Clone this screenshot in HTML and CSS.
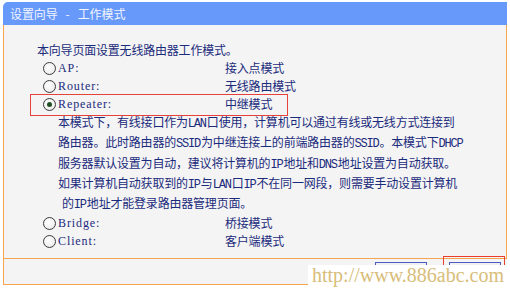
FILE: index.html
```html
<!DOCTYPE html>
<html lang="zh-CN">
<head>
<meta charset="utf-8">
<title>设置向导 - 工作模式</title>
<link rel="stylesheet" href="styles.css">
</head>
<body>
<div class="wizard">
  <div class="title">设置向导<span class="dash">-</span>工作模式</div>
  <div class="panel">
    <div class="intro">本向导页面设置无线路由器工作模式。</div>
    <div class="row"><span class="radio"></span><span class="label">AP:</span><span class="desc">接入点模式</span></div>
    <div class="row"><span class="radio"></span><span class="label">Router:</span><span class="desc">无线路由模式</span></div>
    <div class="row selected"><span class="radio checked"></span><span class="label">Repeater:</span><span class="desc">中继模式</span></div>
    <div class="note">
      <div>本模式下，有线接口作为<span class="en">LAN</span>口使用，计算机可以通过有线或无线方式连接到</div>
      <div>路由器。此时路由器的<span class="en">SSID</span>为中继连接上的前端路由器的<span class="en">SSID</span>。本模式下<span class="en">DHCP</span></div>
      <div>服务器默认设置为自动，建议将计算机的<span class="en">IP</span>地址和<span class="en">DNS</span>地址设置为自动获取。</div>
      <div>如果计算机自动获取到的<span class="en">IP</span>与<span class="en">LAN</span>口<span class="en">IP</span>不在同一网段，则需要手动设置计算机</div>
      <div class="last">的<span class="en">IP</span>地址才能登录路由器管理页面。</div>
    </div>
    <div class="row"><span class="radio"></span><span class="label">Bridge:</span><span class="desc">桥接模式</span></div>
    <div class="row"><span class="radio"></span><span class="label">Client:</span><span class="desc">客户端模式</span></div>
  </div>
  <div class="footer">
    <span class="btn"></span>
    <span class="btn next"></span>
  </div>
</div>
<div class="watermark">http://www.886abc.com</div>
</body>
</html>
```

FILE: styles.css
```css
html, body {
  margin: 0;
  padding: 0;
}
body {
  width: 510px;
  height: 288px;
  overflow: hidden;
  background: #ffffff;
  position: relative;
  font-family: "Noto Sans CJK SC", sans-serif;
  font-size: 12px;
  color: #1b2b7c;
}
.wizard {
  margin: 2px 0 0 3px;
  width: 504px;
}
.title {
  height: 23px;
  line-height: 23px;
  background: #6799fb;
  border-top-left-radius: 5px;
  color: #f2f5ff;
  padding-left: 7px;
  font-size: 12px;
  letter-spacing: -0.1px;
}
.title .dash {
  margin: 0 8px;
}
.panel {
  box-sizing: border-box;
  height: 234px;
  background: #f4f4f4;
  border-left: 1px solid #f6a452;
  border-right: 1px solid #f6a452;
  border-bottom: 1px solid #f6a452;
  padding: 16px 0 0 33px;
  line-height: 18px;
  letter-spacing: -0.2px;
}
.intro {
  white-space: nowrap;
}
.row {
  display: flex;
  align-items: center;
  height: 18px;
  padding-left: 6px;
  position: relative;
}
.row.selected::after {
  content: "";
  position: absolute;
  left: -7px;
  top: -1px;
  width: 256px;
  height: 20px;
  border: 1px solid #e8403a;
  pointer-events: none;
}
.radio {
  box-sizing: border-box;
  width: 13px;
  height: 13px;
  border-radius: 50%;
  border: 1px solid #3c3c3c;
  background: radial-gradient(circle at 40% 40%, #ffffff 0%, #f0f0f0 60%, #d8d8d8 100%);
  display: flex;
  align-items: center;
  justify-content: center;
  flex: none;
}
.radio.checked::before {
  content: "";
  width: 5px;
  height: 5px;
  border-radius: 50%;
  background: #1f4f22;
}
.label {
  font-family: "Liberation Serif", serif;
  font-size: 12px;
  letter-spacing: 0.9px;
  margin-left: 2px;
  width: 167px;
  flex: none;
}
.desc {
  white-space: nowrap;
}
.note {
  padding-left: 21px;
  white-space: nowrap;
  line-height: 18.3px;
}
.note .last {
  padding-left: 4px;
}
.en {
  font-family: "Liberation Mono", monospace;
  font-size: 12px;
  letter-spacing: -1.2px;
  margin-right: 1px;
}
.footer {
  box-sizing: border-box;
  height: 26px;
  background: #f4f4f4;
  border-left: 1px solid #f6a452;
  border-bottom: 1px solid #f6a452;
  display: flex;
  justify-content: flex-end;
  align-items: flex-start;
  padding: 3px 6px 0 0;
  gap: 22px;
  position: relative;
}
.btn {
  box-sizing: border-box;
  width: 52px;
  height: 20px;
  border: 1px solid #4d5bc4;
  background: #f0f0f0;
  position: relative;
}
.btn.next::after {
  content: "";
  position: absolute;
  left: -7px;
  top: -7px;
  width: 60px;
  height: 30px;
  border: 1px solid #e8402c;
}
.watermark {
  position: absolute;
  left: 308px;
  top: 265px;
  width: 202px;
  height: 23px;
  background: #ffffff;
  font-family: "Liberation Serif", serif;
  font-size: 20px;
  line-height: 20px;
  color: #d8bd7a;
  padding-left: 4px;
  box-sizing: border-box;
  white-space: nowrap;
}
```
